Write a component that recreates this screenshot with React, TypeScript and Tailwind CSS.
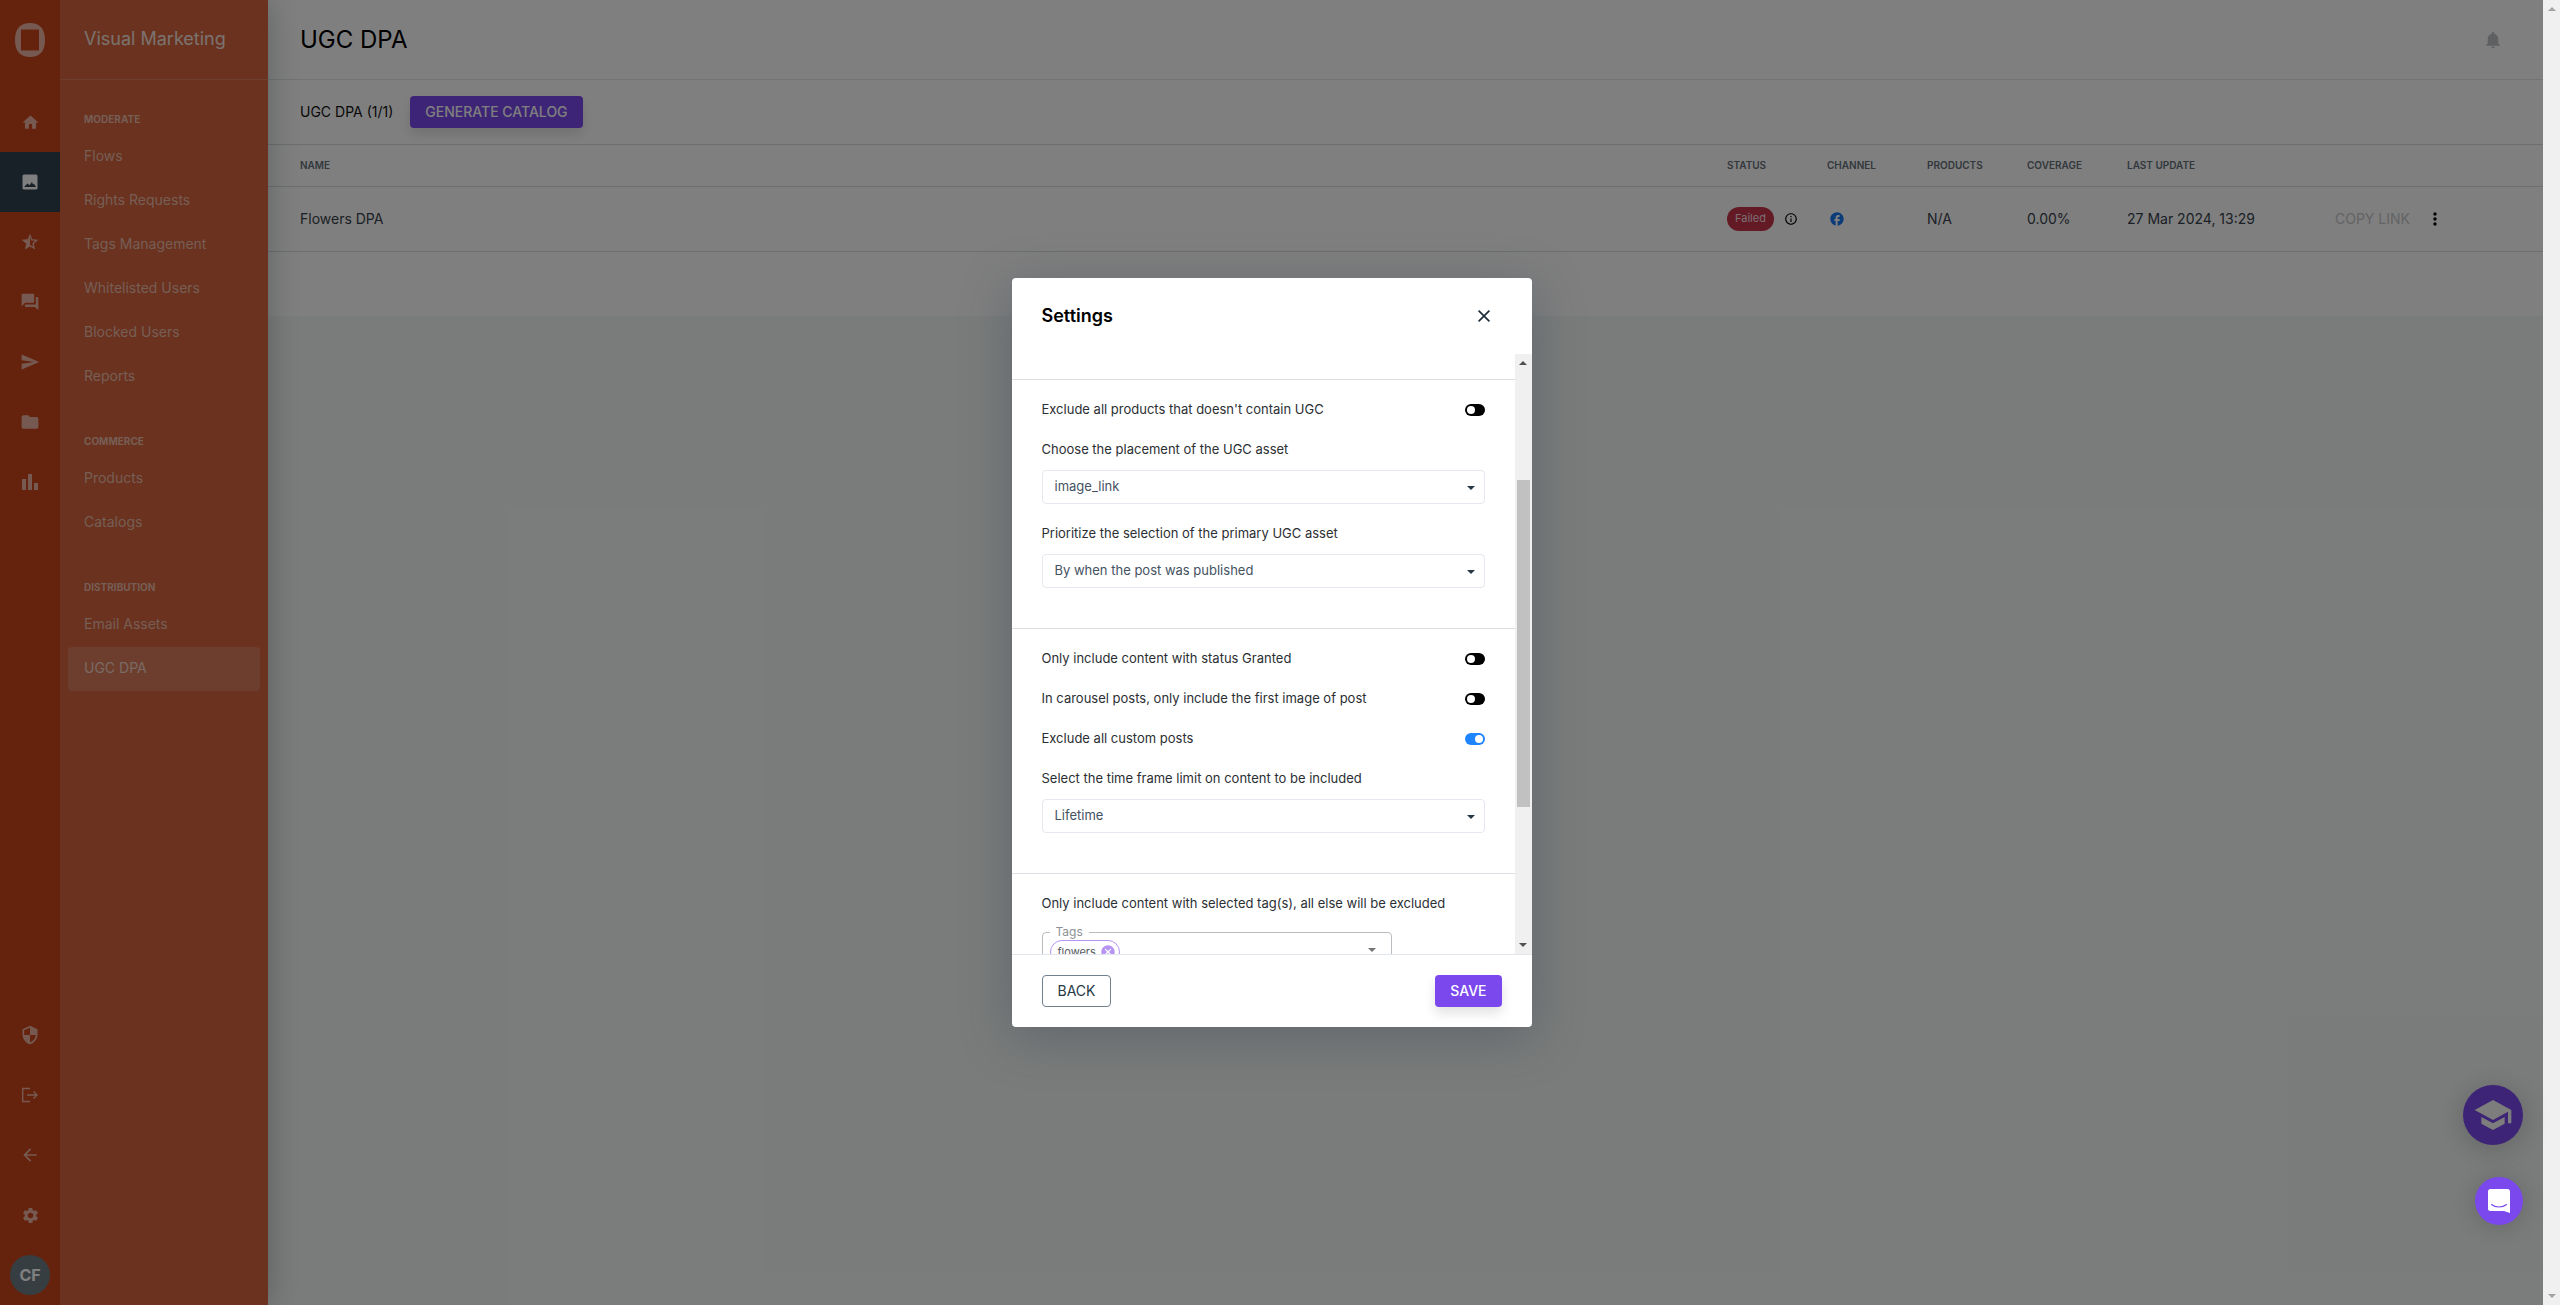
import type { ReactNode } from "react"
import { IoMdNotifications } from "react-icons/io"
import {
  MdArrowBack,
  MdBarChart,
  MdCancel,
  MdFacebook,
  MdFolder,
  MdHome,
  MdInfoOutline,
  MdMoreVert,
  MdQuestionAnswer,
  MdSchool,
  MdSecurity,
  MdSend,
  MdSettings,
  MdStarHalf,
} from "react-icons/md"

const navSections = [
  {
    title: "Moderate",
    items: ["Flows", "Rights Requests", "Tags Management", "Whitelisted Users", "Blocked Users", "Reports"],
  },
  { title: "Commerce", items: ["Products", "Catalogs"] },
  { title: "Distribution", items: ["Email Assets", "UGC DPA"] },
]

function ImageIcon() {
  return (
    <svg viewBox="0 0 16 16" className="size-4" fill="currentColor">
      <path
        fillRule="evenodd"
        d="M2 .5h12A1.5 1.5 0 0 1 15.5 2v12a1.5 1.5 0 0 1-1.5 1.500H2A1.5 1.5 0 0 1 .5 14V2A1.5 1.5 0 0 1 2 .5zM2 13h12l-2-3.200-1 .8L10 8l-2.500 3.300L5.500 9.500z"
      />
    </svg>
  )
}

function LogoutIcon() {
  return (
    <svg viewBox="0 0 18 16" className="w-[18px] h-4" fill="none" stroke="currentColor" strokeWidth="1.4">
      <path d="M9 1.500H1.700v13H9M6 8h10M12.500 4.500 16 8l-3.500 3.500" />
    </svg>
  )
}

function RailButton({ label, active, children }: { label: string; active?: boolean; children: ReactNode }) {
  return (
    <button
      aria-label={label}
      className={`flex h-[60px] w-full items-center justify-center ${
        active ? "bg-[#304250] text-white" : "text-[#edb5a4]"
      }`}
    >
      {children}
    </button>
  )
}

function Rail() {
  return (
    <div className="relative z-10 flex w-[60px] shrink-0 flex-col bg-[#cb461b] pb-2.5">
      <div className="flex h-20 items-center justify-center">
        <svg viewBox="0 0 30 34" className="h-[34px] w-[30px] text-[#edb5a4]" fill="currentColor">
          <path
            fillRule="evenodd"
            d="M15 0C24 0 30 5 30 17S24 34 15 34 0 29 0 17 6 0 15 0zM6 6.500v21h18v-21z"
          />
        </svg>
      </div>
      <div className="mt-3">
        <RailButton label="Home"><MdHome className="size-[19px]" /></RailButton>
        <RailButton label="Visual Marketing" active><ImageIcon /></RailButton>
        <RailButton label="Reviews"><MdStarHalf className="size-5" /></RailButton>
        <RailButton label="Messages"><MdQuestionAnswer className="size-5" /></RailButton>
        <RailButton label="Publish"><MdSend className="size-5" /></RailButton>
        <RailButton label="Files"><MdFolder className="size-5" /></RailButton>
        <RailButton label="Analytics"><MdBarChart className="size-6" /></RailButton>
      </div>
      <div className="mt-auto">
        <RailButton label="Security"><MdSecurity className="size-5" /></RailButton>
        <RailButton label="Log out"><LogoutIcon /></RailButton>
        <RailButton label="Back"><MdArrowBack className="size-5" /></RailButton>
        <RailButton label="Settings"><MdSettings className="size-[19px]" /></RailButton>
      </div>
      <button className="mx-auto mt-2.5 size-10 rounded-full bg-[#6e7c84] font-bold text-white">CF</button>
    </div>
  )
}

function SideNav() {
  return (
    <nav className="relative w-52 shrink-0 bg-[#d5653f] shadow-[0_0_30px_rgba(38,50,56,0.3)]">
      <div className="flex h-20 items-center border-b border-[#db7d5d] px-6 pb-0.5 text-lg text-[#f7e5df]">
        Visual Marketing
      </div>
      <div className="px-2 pt-6">
        {navSections.map((section) => (
          <div key={section.title} className="mb-[27px]">
            <h2 className="flex h-[31px] items-center px-4 text-[10px] font-bold uppercase text-[#ecbcaa]">
              {section.title}
            </h2>
            {section.items.map((item) => (
              <a
                key={item}
                href="#"
                className={`flex h-11 items-center rounded px-4 pb-0.5 text-sm ${
                  item === "UGC DPA" ? "bg-[#da7d5c] text-[#f3d3c8]" : "text-[#ecbcaa]"
                }`}
              >
                {item}
              </a>
            ))}
          </div>
        ))}
      </div>
    </nav>
  )
}

function Catalogs() {
  return (
    <main className="min-w-0 flex-1 bg-[#f5f8f7] text-sm">
      <div className="bg-white pb-16">
        <header className="flex h-20 items-center justify-between border-b border-[#e4e6e8] pl-8 pr-10">
          <h1 className="text-2xl text-black">UGC DPA</h1>
          <button aria-label="Notifications" className="text-[#bcc1c4]">
            <IoMdNotifications className="size-5" />
          </button>
        </header>
        <div className="flex h-[65px] items-center gap-[17px] border-b border-[#d9dde1] pl-8">
          <span className="text-[#111]">UGC DPA (1/1)</span>
          <button className="h-8 rounded bg-[#7a48ec] px-[15px] font-medium uppercase text-white shadow-[0_6px_12px_rgba(0,0,0,0.12)]">
            Generate catalog
          </button>
        </div>
        <table className="w-full table-fixed text-left text-[#37414b]">
          <thead>
            <tr className="h-[41px] border-b border-[#d9dde1] text-[10px] uppercase text-[#66707a] [&>th]:font-semibold">
              <th className="pl-8">Name</th>
              <th className="w-25">Status</th>
              <th className="w-25">Channel</th>
              <th className="w-25">Products</th>
              <th className="w-25">Coverage</th>
              <th className="w-[208px]">Last update</th>
              <th className="w-[208px]" aria-label="Actions" />
            </tr>
          </thead>
          <tbody>
            <tr className="h-[65px] border-b border-[#d9dde1]">
              <td className="pl-8">Flowers DPA</td>
              <td>
                <div className="flex items-center gap-2.5">
                  <span className="flex h-6 items-center rounded-full bg-[#c8354b] px-2 text-[11px] text-[#f5dde0]">
                    Failed
                  </span>
                  <MdInfoOutline className="size-3.5 text-black" />
                </div>
              </td>
              <td>
                <MdFacebook className="ml-0.5 size-4 text-[#1877f2]" />
              </td>
              <td>N/A</td>
              <td>0.00%</td>
              <td>27 Mar 2024, 13:29</td>
              <td>
                <div className="flex items-center gap-[15px]">
                  <button className="uppercase text-[#c5c8cb]" disabled>Copy link</button>
                  <button aria-label="More" className="text-black">
                    <MdMoreVert className="size-5" />
                  </button>
                </div>
              </td>
            </tr>
          </tbody>
        </table>
      </div>
    </main>
  )
}

function Toggle({ label, on }: { label: string; on?: boolean }) {
  return (
    <label className="flex h-10 items-center justify-between">
      {label}
      <input
        type="checkbox"
        role="switch"
        defaultChecked={on}
        className="flex h-3 w-5 appearance-none items-center rounded-full bg-black px-0.5 before:size-2 before:rounded-full before:bg-white checked:justify-end checked:bg-[#1e85ff]"
      />
    </label>
  )
}

function SelectField({ id, label, value }: { id: string; label: string; value: string }) {
  return (
    <div className="mb-2.5">
      <label htmlFor={id} className="flex h-10 items-center">
        {label}
      </label>
      <div className="relative">
        <select
          id={id}
          className="block h-[34px] w-full appearance-none rounded border border-[#e6e8ef] bg-white px-3 text-[#44525f]"
        >
          <option>{value}</option>
        </select>
        <svg viewBox="0 0 8 4" className="pointer-events-none absolute right-2.5 top-4 h-1 w-2 text-[#263845]" fill="currentColor">
          <path d="M0 0h8L4 4z" />
        </svg>
      </div>
    </div>
  )
}

function Scrollbar() {
  return (
    <div className="flex w-[17px] shrink-0 flex-col items-center bg-[#f0f0f0] py-[7px]">
      <svg viewBox="0 0 8 4" className="h-1 w-2" fill="#505050">
        <path d="M0 4h8L4 0z" />
      </svg>
      <div className="mt-[115px] h-[327px] w-[13px] bg-[#c1c1c1]" />
      <svg viewBox="0 0 8 4" className="mt-auto h-1 w-2" fill="#505050">
        <path d="M0 0h8L4 4z" />
      </svg>
    </div>
  )
}

function SettingsDialog() {
  return (
    <div
      role="dialog"
      aria-labelledby="settings-title"
      className="flex w-[520px] flex-col rounded bg-white shadow-[0_10px_50px_rgba(50,60,80,0.35)]"
    >
      <div className="flex h-[76px] items-center justify-between px-[30px]">
        <h2 id="settings-title" className="text-lg font-semibold text-black">Settings</h2>
        <button aria-label="Close" className="mr-3 text-[#1d2d3a]">
          <svg viewBox="0 0 12 12" className="size-3" fill="none" stroke="currentColor" strokeWidth="1.700">
            <path d="M.6.6l10.800 10.800M11.400.6.6 11.400" />
          </svg>
        </button>
      </div>

      <div className="flex h-[600px] overflow-hidden text-[13px] text-[#2b2f33]">
        <div className="flex-1 pt-[25px]">
          <section className="border-t border-[#dcdfe3] px-[30px] pb-[30px] pt-2.5">
            <Toggle label="Exclude all products that doesn't contain UGC" />
            <SelectField id="placement" label="Choose the placement of the UGC asset" value="image_link" />
            <SelectField
              id="priority"
              label="Prioritize the selection of the primary UGC asset"
              value="By when the post was published"
            />
          </section>
          <section className="border-t border-[#dcdfe3] px-[30px] pb-[30px] pt-2.5">
            <Toggle label="Only include content with status Granted" />
            <Toggle label="In carousel posts, only include the first image of post" />
            <Toggle label="Exclude all custom posts" on />
            <SelectField
              id="timeframe"
              label="Select the time frame limit on content to be included"
              value="Lifetime"
            />
          </section>
          <section className="border-t border-[#dcdfe3] px-[30px] pt-2.5">
            <p className="flex h-10 items-center">
              Only include content with selected tag(s), all else will be excluded
            </p>
            <fieldset className="flex h-12 w-[350px] items-start justify-between rounded border border-[#b9bcc0] px-[7px]">
              <legend className="px-[6px] text-xs text-[#8d9196]">Tags</legend>
              <span className="flex h-6 items-center gap-1 rounded-full border border-[#b794f4] pl-[7px] pr-[3px] text-[11px] text-[#55595e]">
                flowers
                <button aria-label="Remove flowers" className="text-[#b794f4]">
                  <MdCancel className="size-4" />
                </button>
              </span>
              <svg viewBox="0 0 8 4" className="mr-2 mt-2 h-1 w-2" fill="#757575">
                <path d="M0 0h8L4 4z" />
              </svg>
            </fieldset>
          </section>
        </div>
        <Scrollbar />
      </div>

      <div className="flex h-[73px] items-center justify-between border-t border-[#e1e6ec] px-[30px] text-sm">
        <button className="h-8 rounded border border-[#71808d] px-[15px] uppercase text-[#263845]">Back</button>
        <button className="h-8 rounded bg-[#7a48ec] px-[15px] font-medium uppercase text-white shadow-[0_6px_12px_rgba(0,0,0,0.12)]">
          Save
        </button>
      </div>
    </div>
  )
}

export default function App() {
  return (
    <div className="flex h-screen overflow-hidden font-['Inter',sans-serif]">
      <div className="relative flex min-w-0 flex-1">
        <Rail />
        <SideNav />
        <Catalogs />
        <button
          aria-label="Academy"
          className="absolute bottom-40 right-5 flex size-[60px] items-center justify-center rounded-full bg-[#7a48ec] text-[#fafafa] shadow-[0_4px_30px_rgba(0,0,0,0.2)]"
        >
          <MdSchool className="size-10" />
        </button>

        <div className="absolute inset-0 z-20 flex items-center justify-center bg-black/50">
          <SettingsDialog />
        </div>

        <button
          aria-label="Open chat"
          className="absolute bottom-20 right-5 z-30 flex size-12 items-center justify-center rounded-full bg-[#7a48ec] shadow-[0_2px_24px_rgba(0,0,0,0.16)]"
        >
          <svg viewBox="0 0 22 24" className="h-6 w-[22px]">
            <path fill="#fff" d="M2.500 0h17A2.500 2.500 0 0 1 22 2.500V24l-6-2H2.500A2.500 2.500 0 0 1 0 19.500v-17A2.500 2.500 0 0 1 2.500 0z" />
            <path d="M3.500 15.500c4 3.300 11 3.300 15 0" fill="none" stroke="#7a48ec" strokeWidth="1.100" strokeLinecap="round" />
          </svg>
        </button>
      </div>

      {/* window scrollbar */}
      <div className="flex w-[17px] shrink-0 flex-col items-center justify-between bg-[#f0f0f0] py-[7px]">
        <svg viewBox="0 0 8 4" className="h-1 w-2" fill="#a3a3a3">
          <path d="M0 4h8L4 0z" />
        </svg>
        <svg viewBox="0 0 8 4" className="h-1 w-2" fill="#a3a3a3">
          <path d="M0 0h8L4 4z" />
        </svg>
      </div>
    </div>
  )
}
